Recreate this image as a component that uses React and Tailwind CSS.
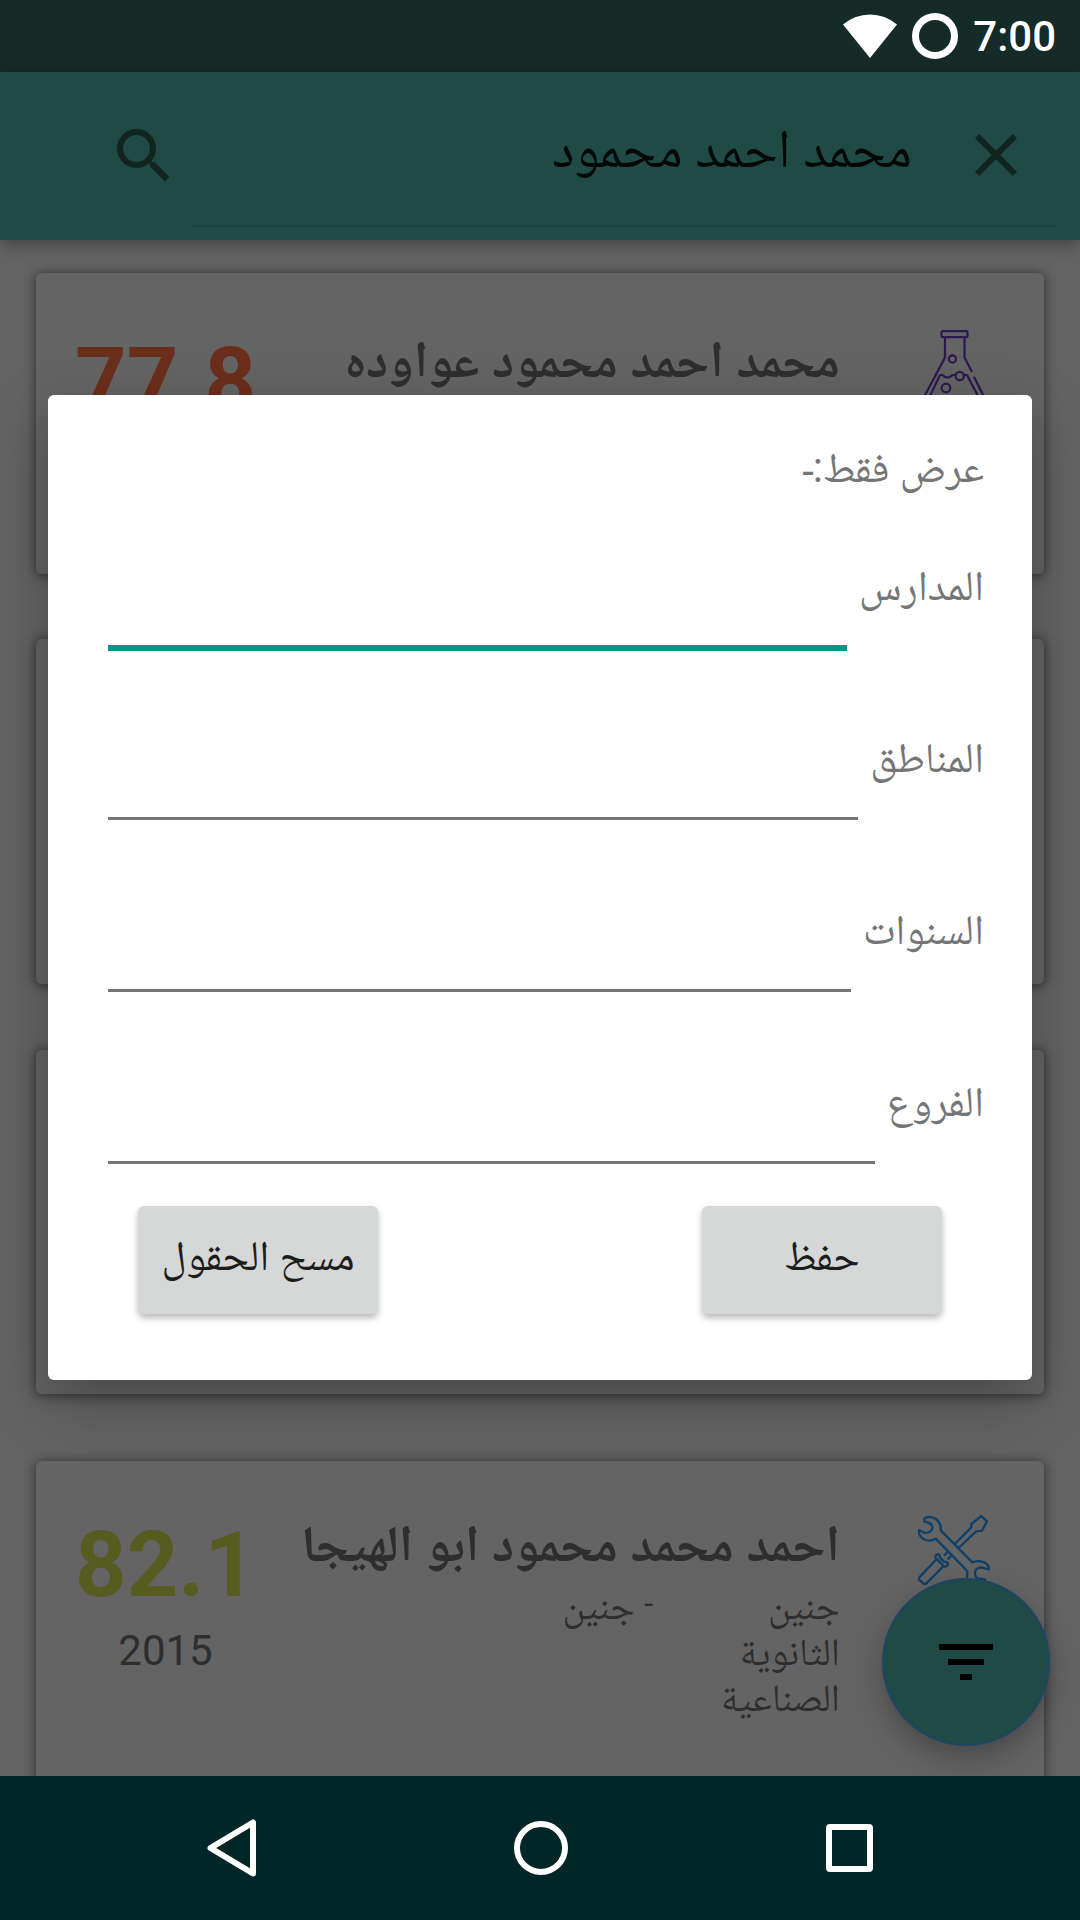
import { MdClose, MdSearch } from "react-icons/md";

function StatusBar() {
  return (
    <header className="flex h-[72px] shrink-0 items-center justify-end bg-[#152b28] pr-6 text-white">
      <svg className="mr-[15px] mb-px h-[44px] w-[54px]" viewBox="0 0 54 44" fill="currentColor">
        <path d="M0 10.5Q12 .5 27 .5T54 10.5L27 44Z" />
      </svg>
      <span className="mr-[15px] size-[46px] rounded-full border-[7px] border-white" />
      <span className="pt-[2px] text-[42px] leading-[72px] font-medium">7:00</span>
    </header>
  );
}

function SearchBar() {
  return (
    <div className="relative z-10 flex h-[168px] shrink-0 bg-[#1f4a45] pl-[108px] shadow-[0_5px_14px_rgba(0,0,0,0.32)]">
      <MdSearch className="mt-12 mr-3 size-[72px] text-[#11241f]" />
      <div dir="rtl" className="flex h-[155px] w-[864px] border-b-2 border-[#1b413c] pr-6">
        <MdClose className="mt-[47px] size-[72px] text-[#11241f]" />
        <span className="mr-12 text-[54px] leading-[153px] text-[#040908] [word-spacing:-0.5px]">محمد احمد محمود</span>
      </div>
    </div>
  );
}

function FlaskIcon() {
  return (
    <svg className="-mt-px size-[72px]" viewBox="0 0 72 72" fill="none" stroke="#2d1850" strokeWidth="2.2" strokeLinejoin="round">
      <rect x="23.5" y="1.2" width="26" height="6" rx="1.2" />
      <path d="M27 7V27.5L6 67q-2 4 3 4h53q5 0 4-4L56 46.7" />
      <path d="M46.5 7V27.5L54 42" />
      <path d="M12 66L21.5 46q1-1.6 3-1 2 2.5 5 2.5t5-2.5h3M46 45h3L60 66" />
      <circle cx="41.7" cy="46" r="4.2" />
      <circle cx="34.5" cy="29" r="3.6" />
      <circle cx="28" cy="58" r="4.3" />
    </svg>
  );
}

function ToolsIcon() {
  return (
    <svg className="size-[72px]" viewBox="39 45 216 216" fill="none" stroke="#0f406a" strokeWidth="7" strokeLinejoin="round">
      <path d="M58 55C75 46 108 52 108 92L202 187C222 178 250 186 253 208L240 205C222 198 208 208 210 222C211 232 216 236 226 236L243 240" />
      <path d="M188 245C184 235 187 225 187 213L92 116C68 130 40 115 41 90L56 97C70 102 84 92 82 80C81 70 72 68 58 64L58 55" />
      <path d="M149 132L199 82V72L229 48L246 64L231 92L213 94L161 144" />
      <path d="M117 167L128 156M128 178L139 167" />
      <path d="M93 166q5-7 11 0v6l13 13 8 1q8 6 0 12-6 5-11-2l-21-21q-4-4 0-9Z" />
      <path d="M95 177L43 232Q40 236 43 240L56 251Q60 254 64 250L117 197" />
    </svg>
  );
}

function ResultCard({ className, icon, name, score, scoreClass, year, school, city }) {
  return (
    <article
      dir="rtl"
      className={`flex shrink-0 items-start rounded-[6px] bg-[#646464] text-[#2e2e2e] shadow-[0_1px_12px_1px_rgba(0,0,0,0.5)] ${className}`}
    >
      {name && (
        <>
          <div className="mt-[54px] mr-[54px] ml-[78px] shrink-0">{icon}</div>
          <div className="flex-1 pt-[45px]">
            <h2 className="text-[51px] leading-[76px] font-bold whitespace-nowrap">{name}</h2>
            <div className="flex pt-px text-[38.5px] leading-[46px]">
              <p className="w-[187px] pl-5">{school}</p>
              {city && (
                <p>
                  <span className="relative -top-[5px] text-[32px]">-</span> {city}
                </p>
              )}
            </div>
          </div>
          <div dir="ltr" className="mt-[60px] ml-[39px] flex flex-col items-center">
            <span className={`text-[90px] leading-[90px] font-bold ${scoreClass}`}>{score}</span>
            <span className="mt-[15px] text-[42px] leading-[50px]">{year}</span>
          </div>
        </>
      )}
    </article>
  );
}

function FilterButton() {
  return (
    <button className="absolute top-[1578px] left-[882px] z-10 flex size-[168px] flex-col items-center justify-center gap-[9px] rounded-full border-2 border-[#1f4566] bg-[#1f4a45] shadow-[0_12px_28px_rgba(0,0,0,0.28)]">
      <span className="h-[6px] w-[54px] bg-black" />
      <span className="h-[6px] w-9 bg-black" />
      <span className="h-[6px] w-3 bg-black" />
    </button>
  );
}

function FilterField({ label, focused }) {
  return (
    <div className="flex h-[172px] items-start gap-3">
      <label className="pt-[45px]">{label}</label>
      <div className={`mt-[134px] flex-1 ${focused ? "h-[6px] bg-[#009688]" : "h-[3px] bg-[#757575]"}`} />
    </div>
  );
}

function DialogButton({ children }) {
  return (
    <button className="h-[108px] w-[240px] rounded-[6px] bg-[#d6d7d7] pb-2 text-center leading-[100px] text-[#1c1d1d] shadow-[0_4px_7px_rgba(0,0,0,0.28)]">
      {children}
    </button>
  );
}

function FilterDialog() {
  return (
    <section
      dir="rtl"
      className="absolute top-[395px] left-12 z-20 h-[985px] w-[984px] rounded-[6px] bg-white pt-[43px] pr-12 pl-[60px] text-[42px] leading-[60px] text-[#757575] shadow-[0_22px_60px_rgba(0,0,0,0.28)]"
    >
      <h1 className="h-[73px]">
        عرض فقط:<span className="relative top-1 -mr-px">-</span>
      </h1>
      <FilterField label="المدارس" focused />
      <FilterField label="المناطق" />
      <FilterField label="السنوات" />
      <FilterField label="الفروع" />
      <div className="mt-[7px] mr-[42px] ml-[30px] flex justify-between">
        <DialogButton>حفظ</DialogButton>
        <DialogButton>مسح الحقول</DialogButton>
      </div>
    </section>
  );
}

function NavigationBar() {
  return (
    <nav className="relative z-20 grid h-36 shrink-0 grid-cols-3 place-items-center bg-[#002627] pr-[76px] pl-[78px]">
      <svg className="h-[58px] w-[50px]" viewBox="0 0 50 58" fill="none" stroke="white" strokeWidth="6" strokeLinejoin="round">
        <path d="M3.5 29L46 3.5V54.5Z" />
      </svg>
      <span className="size-[54px] rounded-full border-[6px] border-white" />
      <span className="h-12 w-[47px] rounded-[4px] border-[6px] border-white" />
    </nav>
  );
}

export default function App() {
  return (
    <div className="relative flex h-[1920px] w-[1080px] flex-col overflow-hidden bg-[#646464] font-['Roboto','Noto_Naskh_Arabic',sans-serif]">
      <StatusBar />
      <SearchBar />
      <main className="flex min-h-0 flex-1 flex-col gap-[65px] overflow-hidden px-9 pt-[33px]">
        <ResultCard
          className="h-[301px] pt-1"
          icon={<FlaskIcon />}
          name="محمد احمد محمود عواوده"
          score="77.8"
          scoreClass="text-[#6b2e1b]"
        />
        <ResultCard className="h-[345px]" />
        <ResultCard className="mt-px h-[344px]" />
        <ResultCard
          className="mt-[2px] h-[345px]"
          icon={<ToolsIcon />}
          name="احمد محمد محمود ابو الهيجا"
          score="82.1"
          scoreClass="text-[#565c20]"
          year="2015"
          school="جنين الثانوية الصناعية"
          city="جنين"
        />
      </main>
      <FilterButton />
      <FilterDialog />
      <NavigationBar />
    </div>
  );
}
